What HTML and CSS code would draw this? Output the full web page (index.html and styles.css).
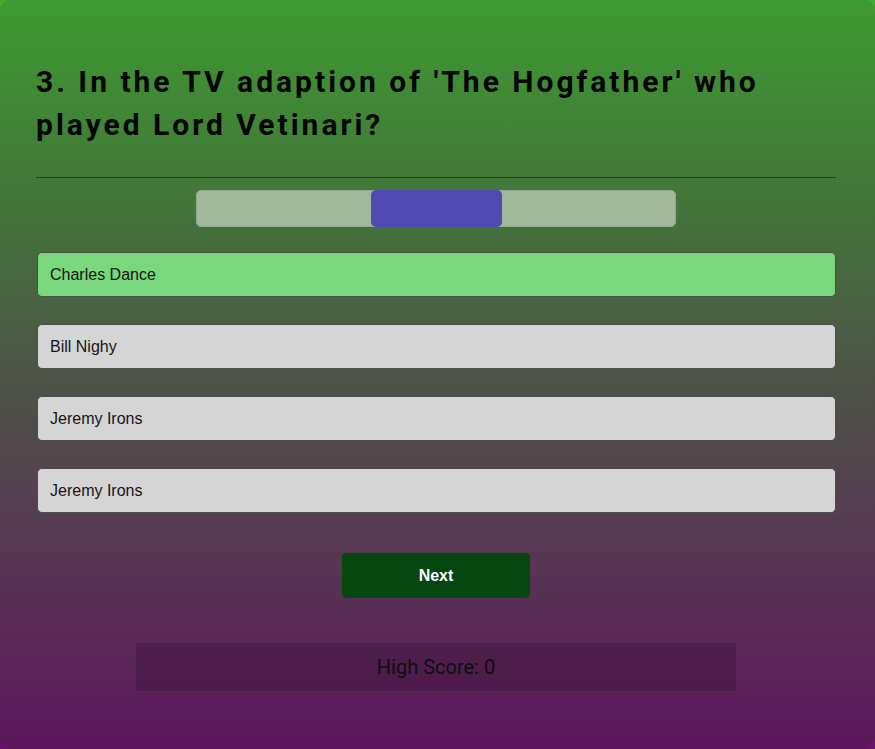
FILE: index.html
```html
<!DOCTYPE html>
<html lang="en">
<head>
<meta charset="utf-8">
<title>Quiz</title>
<link rel="stylesheet" href="styles.css">
</head>
<body>
<div class="card">
  <div class="content">
    <h1 class="question">3. In the TV adaption of 'The Hogfather' who played Lord Vetinari?</h1>
    <hr class="divider">
    <div class="progress">
      <div class="progress-fill"></div>
    </div>
    <div class="answers">
      <button class="answer correct">Charles Dance</button>
      <button class="answer">Bill Nighy</button>
      <button class="answer">Jeremy Irons</button>
      <button class="answer">Jeremy Irons</button>
    </div>
    <div class="actions">
      <button class="next">Next</button>
    </div>
    <div class="score">High Score: 0</div>
  </div>
</div>
</body>
</html>
```
FILE: styles.css
```css
html, body {
  margin: 0;
  padding: 0;
  height: 100%;
}
body {
  background: linear-gradient(to bottom, #45ab2c 0%, #6a1170 100%);
  font-family: "Liberation Sans", Arial, sans-serif;
}
.card {
  min-height: 749px;
  box-sizing: border-box;
  border-radius: 10px;
  background: linear-gradient(to bottom, #3e9a31 0%, #43743a 28%, #4d5447 50%, #563a52 72%, #5d165b 100%);
  overflow: hidden;
}
.content {
  width: 800px;
  margin: 0 0 0 36px;
  padding-top: 60px;
}
.question {
  margin: 0;
  font-family: Roboto, "Noto Sans", sans-serif;
  font-weight: 700;
  font-size: 30px;
  line-height: 43px;
  letter-spacing: 3px;
  color: #050505;
}
.divider {
  margin: 31px 0 0 0;
  border: 0;
  height: 1px;
  background: #2f3a2c;
}
.progress {
  width: 480px;
  height: 37px;
  margin: 12px auto 0;
  background: #a2b89b;
  border-radius: 5px;
  box-sizing: border-box;
  border: 1px solid #95ab8f;
  position: relative;
}
.progress-fill {
  position: absolute;
  left: 174px;
  top: -1px;
  width: 131px;
  height: 37px;
  background: #514bb1;
  border-radius: 5px;
}
.answers {
  display: flex;
  flex-direction: column;
  gap: 27px;
  margin-top: 25px;
}
.answer {
  display: block;
  height: 45px;
  margin: 0 0 0 1px;
  width: 799px;
  padding: 0 12px;
  text-align: left;
  font-family: "Liberation Sans", Arial, sans-serif;
  font-size: 16px;
  color: #141414;
  background: #d5d5d5;
  border: 1px solid #4d4d4d;
  border-radius: 5px;
  box-sizing: border-box;
}
.answer.correct {
  background: #78d87b;
}
.actions {
  display: flex;
  justify-content: center;
  margin-top: 40px;
}
.next {
  width: 188px;
  height: 45px;
  background: #05470f;
  color: #ffffff;
  border: 0;
  border-radius: 4px;
  font-family: "Liberation Sans", Arial, sans-serif;
  font-size: 16px;
  font-weight: 600;
}
.score {
  width: 600px;
  height: 48px;
  margin: 45px auto 0;
  background: rgba(40, 10, 40, 0.25);
  display: flex;
  align-items: center;
  justify-content: center;
  font-family: Roboto, "Noto Sans", sans-serif;
  font-size: 20px;
  color: #0e0e0e;
}
```
